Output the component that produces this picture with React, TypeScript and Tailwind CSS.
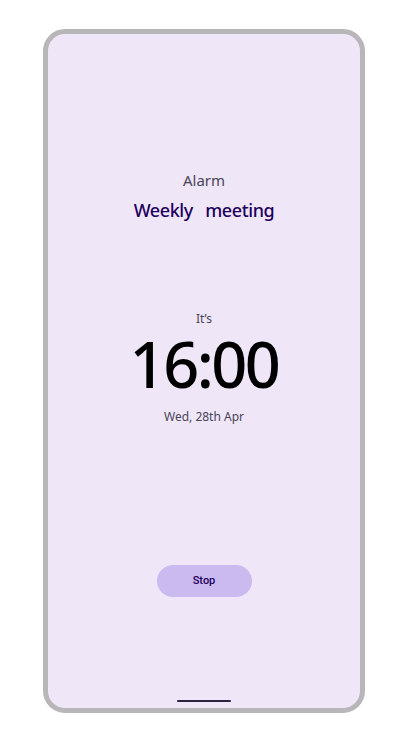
import React from "react";

export default function App() {
  return (
    <div className="w-[412px] h-[746px] bg-white pt-[29px] pl-[43px]" style={{ fontFamily: '"Noto Sans", sans-serif' }}>
      <div className="w-[322px] h-[684px] border-[5px] border-[#b8b6b9] rounded-[22px] bg-[#efe7f8] flex flex-col items-center">
        <div className="mt-[136px] text-[15px] leading-[20px] text-[#4a4458]">Alarm</div>
        <div className="mt-[6px] text-[18px] leading-[28px] font-medium tracking-[-0.4px] text-[#21005d] [word-spacing:8px]">Weekly meeting</div>
        <div className="mt-[86px] text-[12px] leading-[18px] text-[#4a4458]">It’s</div>
        <div className="mt-[6px] text-[63px] leading-[60px] font-medium tracking-[-2.5px] text-black">16:00</div>
        <div className="mt-[14px] text-[12px] leading-[18px] text-[#4a4458]">Wed, 28th Apr</div>
        <button className="mt-[139px] w-[95px] h-[32px] rounded-full bg-[#cbbaf0] text-[11px] font-medium text-[#21005d]" style={{ fontFamily: 'Roboto, sans-serif' }}>Stop</button>
        <div className="mt-auto mb-[6px] w-[54px] h-[2px] rounded-full bg-[#2a2340]" />
      </div>
    </div>
  );
}
